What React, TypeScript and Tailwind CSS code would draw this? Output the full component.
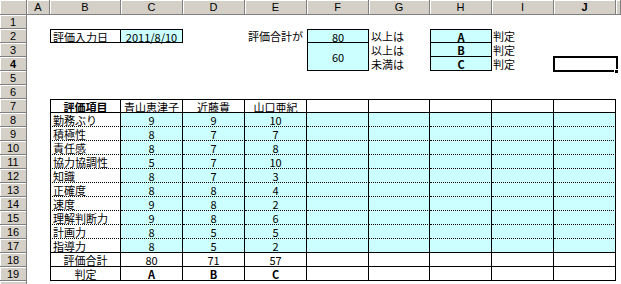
import { Fragment } from 'react';

const COLS = ['A', 'B', 'C', 'D', 'E', 'F', 'G', 'H', 'I', 'J'];

const scores: [string, number, number, number][] = [
  ['勤務ぶり', 9, 9, 10],
  ['積極性', 8, 7, 7],
  ['責任感', 8, 7, 8],
  ['協力協調性', 5, 7, 10],
  ['知識', 8, 7, 3],
  ['正確度', 8, 8, 4],
  ['速度', 9, 8, 2],
  ['理解判断力', 9, 8, 6],
  ['計画力', 8, 5, 5],
  ['指導力', 8, 5, 2],
];

const names = ['青山恵津子', '近藤貴', '山口亜紀'];
const totals = [0, 1, 2].map((i) => scores.reduce((s, row) => s + (row[i + 1] as number), 0));
const grades = totals.map((t) => (t >= 80 ? 'A' : t >= 60 ? 'B' : 'C'));

const hdr =
  'bg-[#d4d0c8] border-r border-b border-[#808080] shadow-[inset_1px_1px_0_#fff] flex items-center justify-center font-["Liberation_Sans",sans-serif] text-[11px] leading-[12px]';

const cyan = 'bg-[#ccffff]';

type Spec = { text?: string | number; cls?: string; active?: boolean } | null;

function cellFor(r: number, c: number): Spec {
  // top block: input date, thresholds and grades
  if (r === 2) {
    if (c === 1) return { text: '評価入力日', cls: 'border border-black pl-[2px]' };
    if (c === 2) return { text: '2011/8/10', cls: `border-y border-r border-black text-center ${cyan}` };
    if (c === 4) return { text: '評価合計が', cls: 'text-right pr-[4px]' };
    if (c === 5) return { text: 80, cls: `border border-black text-center ${cyan}` };
    if (c === 6) return { text: '以上は', cls: 'pl-[2px]' };
    if (c === 7) return { text: 'A', cls: `border border-black text-center font-bold ${cyan}` };
    if (c === 8) return { text: '判定', cls: 'pl-[1px]' };
  }
  if (r === 3) {
    if (c === 5)
      return { text: 60, cls: `row-span-2 border-x border-b border-black flex items-center justify-center ${cyan}` };
    if (c === 6) return { text: '以上は', cls: 'pl-[2px]' };
    if (c === 7) return { text: 'B', cls: `border-x border-b border-black text-center font-bold ${cyan}` };
    if (c === 8) return { text: '判定', cls: 'pl-[1px]' };
  }
  if (r === 4) {
    if (c === 5) return null;
    if (c === 6) return { text: '未満は', cls: 'pl-[2px]' };
    if (c === 7) return { text: 'C', cls: `border-x border-b border-black text-center font-bold ${cyan}` };
    if (c === 8) return { text: '判定', cls: 'pl-[1px]' };
    if (c === 9) return { active: true };
  }

  // evaluation table B7:J19
  if (r >= 7 && r <= 19 && c >= 1) {
    let cls = 'border-r border-black';
    if (c === 1) cls += ' border-l';
    if (r === 7) cls += ' border-t border-b';
    else if (r <= 16) cls += ' border-b [border-bottom-style:dotted]';
    else cls += ' border-b';

    if (r >= 8 && r <= 17 && c >= 2) cls += ` ${cyan}`;

    let text: string | number | undefined;
    if (r === 7) {
      if (c === 1) {
        text = '評価項目';
        cls += ' text-center font-bold';
      } else if (c <= 4) {
        text = names[c - 2];
        cls += ' text-center';
      }
    } else if (r <= 17) {
      const row = scores[r - 8];
      if (c === 1) {
        text = row[0];
        cls += ' pl-[2px]';
      } else if (c <= 4) {
        text = row[c - 1];
        cls += ' text-center';
      }
    } else if (r === 18) {
      cls += ' text-center';
      if (c === 1) text = '評価合計';
      else if (c <= 4) text = totals[c - 2];
    } else {
      cls += ' text-center';
      if (c === 1) text = '判定';
      else if (c <= 4) {
        text = grades[c - 2];
        cls += ' font-bold';
      }
    }
    return { text, cls };
  }

  return {};
}

export default function App() {
  // row 20 only peeks in at the bottom edge, so its number stays blank
  const rows = Array.from({ length: 20 }, (_, i) => i + 1);

  return (
    <div className="w-[621px] h-[284px] overflow-hidden bg-white text-black font-['Noto_Sans_CJK_JP',sans-serif] text-[11px] leading-[12px]">
      <div className="grid grid-cols-[27px_23px_71px_62px_62px_62px_62px_61px_62px_62px_62px_1fr] grid-rows-[15px] auto-rows-[14px]">
        <div className={hdr} />
        {COLS.map((c) => (
          <div key={c} className={`${hdr} ${c === 'J' ? 'font-bold' : ''}`}>
            {c}
          </div>
        ))}
        <div className={hdr} />

        {rows.map((r) => (
          <Fragment key={r}>
            <div className={`${hdr} ${r === 4 ? 'font-bold' : ''}`}>{r < 20 ? r : ''}</div>
            {COLS.map((_, c) => {
              const spec = cellFor(r, c);
              if (spec === null) return null;
              if (spec.active)
                return (
                  <div key={c} className="relative">
                    <div className="absolute -left-[1px] -top-[1px] -right-[2px] -bottom-[1px] z-10 border-2 border-black" />
                    <div className="absolute -right-[3px] -bottom-[3px] z-20 h-[5px] w-[5px] bg-black border border-white" />
                  </div>
                );
              return (
                <div key={c} className={`whitespace-nowrap pt-[1px] ${spec.cls ?? ''}`}>
                  {spec.text}
                </div>
              );
            })}
            <div />
          </Fragment>
        ))}
      </div>
    </div>
  );
}
